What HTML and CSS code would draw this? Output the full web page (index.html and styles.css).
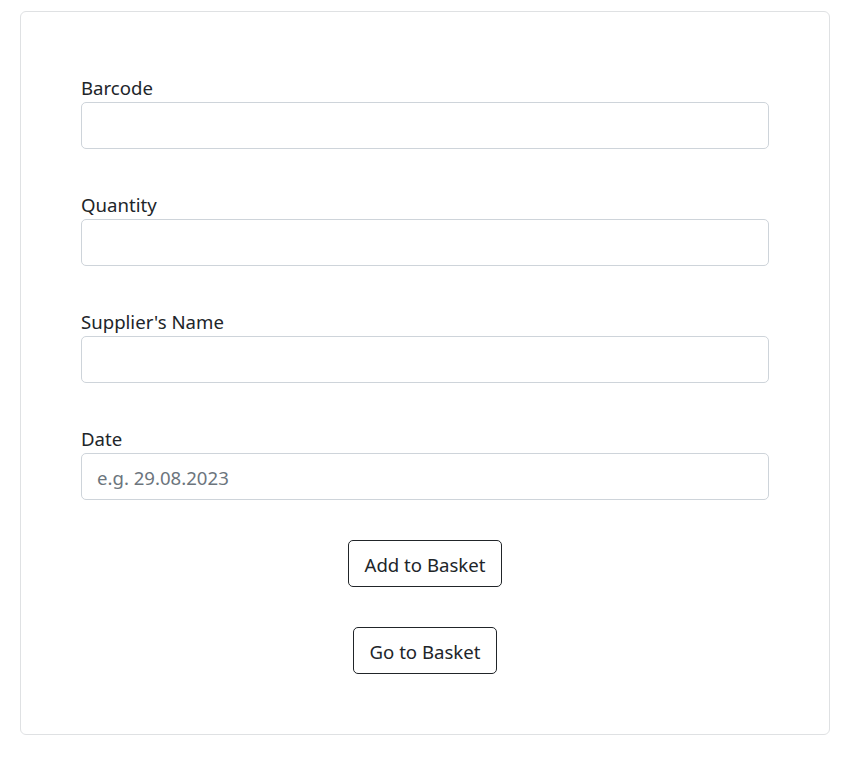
FILE: index.html
```html
<!DOCTYPE html>
<html lang="en">
<head>
<meta charset="utf-8">
<title>Add to Basket</title>
<link rel="stylesheet" href="styles.css">
</head>
<body>
<div class="card">
  <form class="form">
    <div class="field">
      <label class="label" for="barcode">Barcode</label>
      <input class="input" id="barcode" type="text">
    </div>
    <div class="field">
      <label class="label" for="quantity">Quantity</label>
      <input class="input" id="quantity" type="text">
    </div>
    <div class="field">
      <label class="label" for="supplier">Supplier's Name</label>
      <input class="input" id="supplier" type="text">
    </div>
    <div class="field">
      <label class="label" for="date">Date</label>
      <input class="input" id="date" type="text" placeholder="e.g. 29.08.2023">
    </div>
    <div class="actions">
      <button class="btn" type="button">Add to Basket</button>
      <button class="btn" type="button">Go to Basket</button>
    </div>
  </form>
</div>
</body>
</html>
```
FILE: styles.css
```css
html, body {
  margin: 0;
  padding: 0;
  background: #ffffff;
}
body {
  padding: 11px 0 0 20px;
  font-family: "Noto Sans", "Open Sans", sans-serif;
  color: #212529;
}
.card {
  box-sizing: border-box;
  width: 810px;
  height: 724px;
  border: 1px solid #dfe1e3;
  border-radius: 6px;
  padding: 64px 60px 60px 60px;
}
.form {
  display: flex;
  flex-direction: column;
}
.field {
  display: flex;
  flex-direction: column;
  margin-bottom: 44px;
}
.field:nth-child(4) {
  margin-bottom: 40px;
}
.label {
  font-size: 18.6px;
  line-height: 24px;
  margin-bottom: 2px;
  color: #212529;
}
.input {
  box-sizing: border-box;
  width: 688px;
  height: 47px;
  margin: 0;
  border: 1px solid #ced4da;
  border-radius: 5px;
  padding: 1px 15px 0 15px;
  font-family: inherit;
  font-size: 18.6px;
  color: #212529;
  outline: none;
}
.input::placeholder {
  color: #6c757d;
}
.actions {
  display: flex;
  flex-direction: column;
  align-items: center;
  gap: 40px;
}
.btn {
  box-sizing: border-box;
  height: 47px;
  padding: 1px 16px 0 16px;
  background: #ffffff;
  border: 1px solid #212529;
  border-radius: 5px;
  font-family: inherit;
  font-size: 18.6px;
  color: #212529;
  cursor: pointer;
}
```
